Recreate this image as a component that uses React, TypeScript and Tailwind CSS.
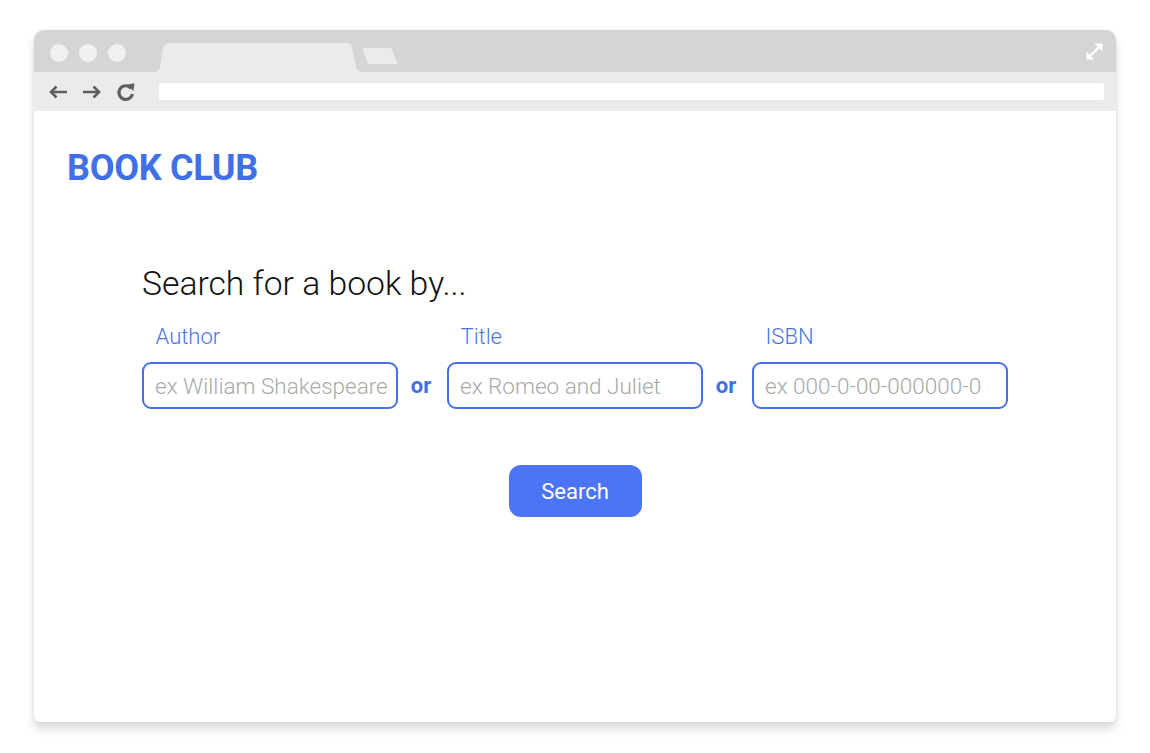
import React from 'react';

const font = { fontFamily: 'Roboto, "Liberation Sans", sans-serif' };

function BackArrow() {
  return (
    <svg width="19" height="14" viewBox="0 0 19 14" fill="none">
      <path d="M18 7H3" stroke="#5f5f5f" strokeWidth="2.6" />
      <path d="M7.5 1.5L2 7l5.5 5.5" stroke="#5f5f5f" strokeWidth="2.6" />
    </svg>
  );
}

function ForwardArrow() {
  return (
    <svg width="19" height="14" viewBox="0 0 19 14" fill="none">
      <path d="M1 7h15" stroke="#5f5f5f" strokeWidth="2.6" />
      <path d="M11.5 1.5L17 7l-5.5 5.5" stroke="#5f5f5f" strokeWidth="2.6" />
    </svg>
  );
}

function Reload() {
  return (
    <svg width="20" height="20" viewBox="0 0 20 20" fill="none">
      <path d="M15 6.2A6.8 6.8 0 1 0 16.4 12" stroke="#5f5f5f" strokeWidth="3.2" />
      <path d="M10.5 2.8L18.5 1.2 17.4 9Z" fill="#5f5f5f" />
    </svg>
  );
}

function Expand() {
  return (
    <svg width="19" height="19" viewBox="0 0 19 19" fill="none">
      <path d="M4.5 14.5L14.5 4.5" stroke="#ffffff" strokeWidth="2.4" />
      <path d="M9.5 1.5H17.5V9.5Z" fill="#ffffff" />
      <path d="M1.5 9.5V17.5H9.5Z" fill="#ffffff" />
    </svg>
  );
}

function Tabs() {
  return (
    <svg width="250" height="29" viewBox="0 0 250 29" className="block">
      <path
        d="M0 29Q4 29 5 23L8 5Q9 0 15 0L191 0Q196 0 197 5L201 23Q202 29 208 29Z"
        fill="#ebebeb"
      />
      <path d="M207 5L236 5 243 21 213 21Z" fill="#ebebeb" strokeLinejoin="round" />
    </svg>
  );
}

function Field({ label, placeholder }: { label: string; placeholder: string }) {
  return (
    <div className="flex flex-col w-[256px]">
      <label className="pl-[13.5px] text-[22px] leading-[22px] font-light text-[#4a74e4]">
        {label}
      </label>
      <input
        type="text"
        placeholder={placeholder}
        className="mt-[14.5px] h-[47px] w-full rounded-[9px] border-2 border-[#4370e6] bg-white pl-[11px] pr-1 text-[22.5px] font-light text-gray-700 outline-none placeholder:text-[#a9a9a9]"
        style={font}
      />
    </div>
  );
}

function Or() {
  return (
    <div className="w-[49px] h-[47px] self-end flex items-center justify-center pr-[3px] text-[22px] font-bold text-[#3f6ee6]">
      or
    </div>
  );
}

export default function App() {
  return (
    <div className="w-[1150px] h-[753px] bg-white pt-[30px] pl-[34px]" style={font}>
      <div className="w-[1082px] h-[692px] flex flex-col rounded-t-[10px] rounded-b-[6px] overflow-hidden bg-white shadow-[0_7px_10px_rgba(0,0,0,0.14),0_0_3px_rgba(0,0,0,0.08)]">
        {/* tab strip */}
        <div className="h-[42px] shrink-0 bg-[#d5d5d5] flex pl-[16px] pr-[12px]">
          <div className="flex gap-[11px] pt-[14px]">
            <span className="w-[18px] h-[18px] rounded-full bg-[#f1f1f1]" />
            <span className="w-[18px] h-[18px] rounded-full bg-[#f1f1f1]" />
            <span className="w-[18px] h-[18px] rounded-full bg-[#f1f1f1]" />
          </div>
          <div className="ml-[29px] self-end">
            <Tabs />
          </div>
          <div className="ml-auto pt-[12px]">
            <Expand />
          </div>
        </div>
        {/* toolbar */}
        <div className="h-[39px] shrink-0 bg-[#ebebeb] flex items-center pl-[15px] pr-[12px]">
          <BackArrow />
          <div className="ml-[14px]">
            <ForwardArrow />
          </div>
          <div className="ml-[15px]">
            <Reload />
          </div>
          <div className="ml-[23px] flex-1 h-[17px] rounded-[2px] bg-white" />
        </div>
        {/* page */}
        <div className="flex-1 pt-[39px] pl-[33px]">
          <h1 className="text-[36px] leading-[36px] font-bold text-[#4070e6] tracking-[-0.3px]">
            BOOK CLUB
          </h1>
          <div className="ml-[75px] w-[866px] mt-[80.5px]">
            <h2 className="text-[33.7px] leading-[34px] font-light text-[#111]">
              Search for a book by...
            </h2>
            <div className="mt-[25px] flex">
              <Field label="Author" placeholder="ex William Shakespeare" />
              <Or />
              <Field label="Title" placeholder="ex Romeo and Juliet" />
              <Or />
              <Field label="ISBN" placeholder="ex 000-0-00-000000-0" />
            </div>
            <div className="mt-[56px] flex justify-center">
              <button
                type="button"
                className="w-[133px] h-[52px] rounded-[12px] bg-[#4b74f6] text-white text-[22px] font-normal"
              >
                Search
              </button>
            </div>
          </div>
        </div>
      </div>
    </div>
  );
}
